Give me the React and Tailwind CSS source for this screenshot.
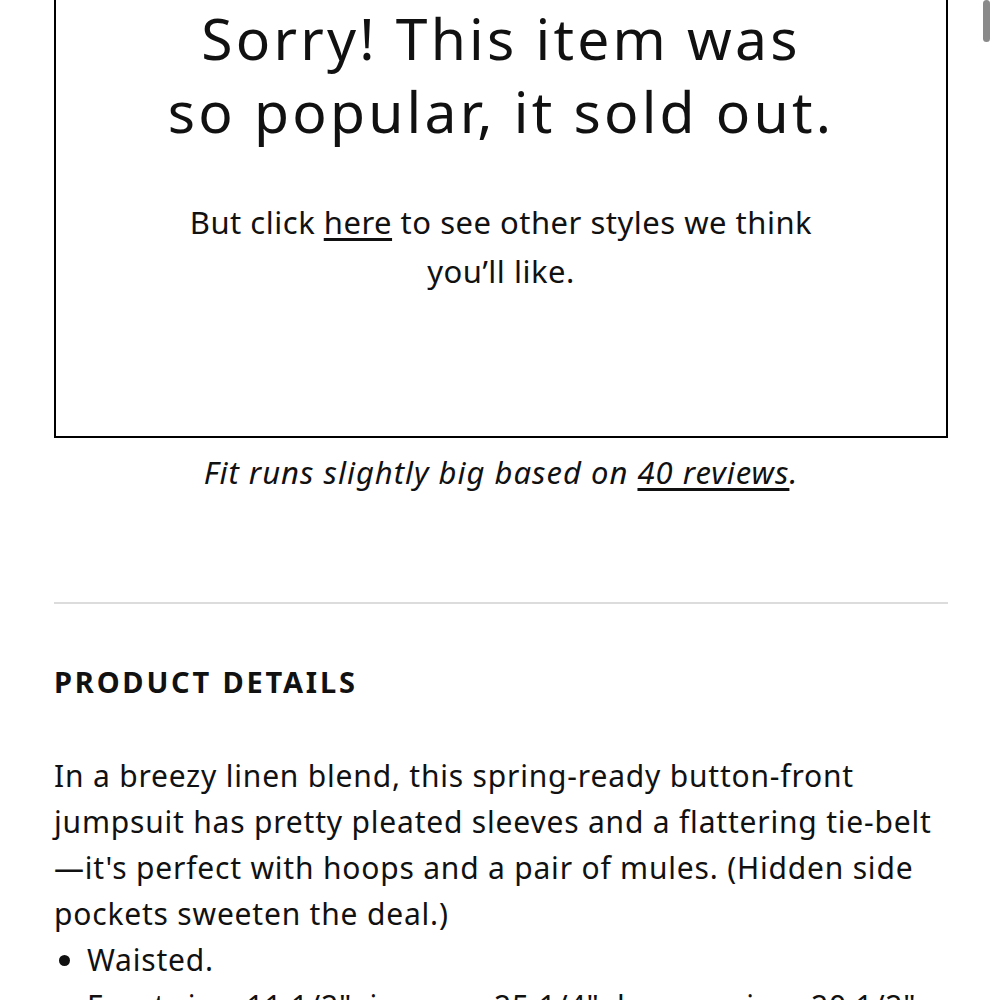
export default function App() {
  return (
    <div className="relative h-[1000px] w-[1000px] overflow-hidden bg-white font-['Noto_Sans',sans-serif] text-[#111]">
      <div className="absolute right-[10px] top-0 h-[42px] w-[7px] rounded-full bg-[#8a8a8a]" />

      <div className="ml-[54px] w-[894px]">
        <section className="-mt-[40px] border-2 border-black px-8 pb-[140px] pt-[40px] text-center">
          <h1 className="text-[57px] leading-[73px] font-normal tracking-[3.2px]">
            Sorry! This item was
            <br />
            so popular, it sold out.
          </h1>
          <p className="mx-auto mt-[50px] w-[680px] text-[31px] leading-[49px] tracking-[0.5px]">
            But click <span className="underline underline-offset-4">here</span> to see other styles we think you’ll like.
          </p>
        </section>

        <p className="mt-[14px] text-center text-[31px] italic leading-[40px] tracking-[1px]">
          Fit runs slightly big based on <span className="underline underline-offset-4">40 reviews</span>.
        </p>

        <hr className="mt-[110px] border-t-2 border-[#dcdcdc]" />

        <h2 className="mt-[60px] text-[29px] font-bold uppercase leading-[36px] tracking-[2.8px]">Product details</h2>

        <p className="mt-[53px] text-[30px] leading-[46px] tracking-[0.8px]">
          In a breezy linen blend, this spring-ready button-front jumpsuit has pretty pleated sleeves and a flattering tie-belt—it's perfect with hoops and a pair of mules. (Hidden side pockets sweeten the deal.)
        </p>
        <ul className="list-disc pl-[33px] text-[30px] leading-[46px] tracking-[0.8px]">
          <li>Waisted.</li>
          <li>Front rise: 11 1/2"; inseam: 25 1/4"; leg opening: 20 1/2".</li>
        </ul>
      </div>
    </div>
  );
}
